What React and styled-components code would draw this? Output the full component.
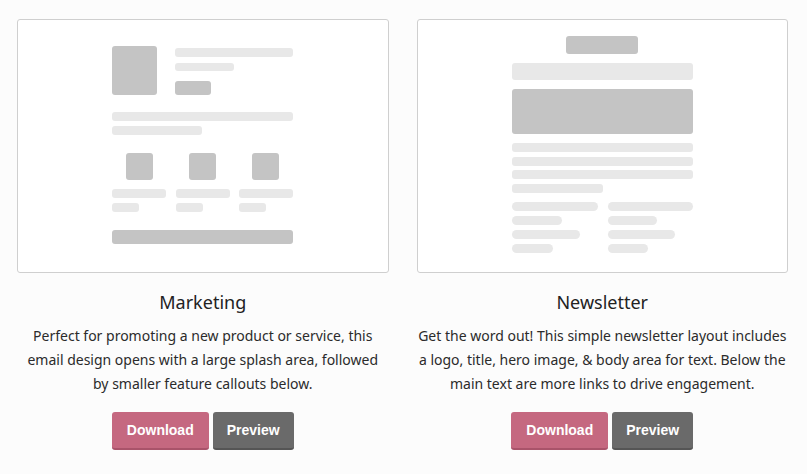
import React from 'react';
import styled, { createGlobalStyle } from 'styled-components';

const GlobalStyle = createGlobalStyle`
  html, body {
    margin: 0;
    background: #fcfcfc;
  }
  body {
    font-family: "Noto Sans", "Open Sans", sans-serif;
    color: #2b2b2b;
  }
`;

const Page = styled.div`
  display: grid;
  grid-template-columns: 1fr 1fr;
  column-gap: 28px;
  padding: 19px 19px 0 17px;
`;

const Column = styled.div`
  display: flex;
  flex-direction: column;
  align-items: center;
`;

const Thumb = styled.div`
  box-sizing: border-box;
  width: 100%;
  height: 254px;
  background: #fff;
  border: 1px solid #cfcfcf;
  border-radius: 3px;
  display: flex;
  justify-content: center;
`;

const Mock = styled.div`
  width: 181px;
  display: flex;
  flex-direction: column;
  padding-top: ${p => p.top}px;
`;

const Bar = styled.div`
  width: ${p => p.w || 181}px;
  height: ${p => p.h || 9}px;
  margin-top: ${p => p.mt || 0}px;
  background: ${p => (p.dark ? '#c4c4c4' : '#e8e8e8')};
  border-radius: ${p => (p.pill ? '5px' : '3px')};
  flex-shrink: 0;
  align-self: ${p => (p.center ? 'center' : 'flex-start')};
`;

const Row = styled.div`
  display: flex;
  gap: ${p => p.gap || 18}px;
  margin-top: ${p => p.mt || 0}px;
`;

const Stack = styled.div`
  display: flex;
  flex-direction: column;
  align-items: ${p => (p.center ? 'center' : 'flex-start')};
  width: ${p => p.w || 'auto'};
`;

const Title = styled.h2`
  margin: 17px 0 0;
  font-size: 18px;
  font-weight: 400;
  line-height: 24px;
  color: #222;
`;

const Description = styled.p`
  width: 369px;
  margin: 10px 0 0;
  font-size: 14px;
  line-height: 24px;
  text-align: center;
  color: #2b2b2b;
`;

const Actions = styled.div`
  display: flex;
  gap: 4px;
  margin-top: 16px;
`;

const Button = styled.button`
  box-sizing: border-box;
  height: 38px;
  padding: 0 ${p => (p.primary ? 15 : 14)}px;
  border: 0;
  border-bottom: 2px solid ${p => (p.primary ? '#a9536a' : '#555')};
  border-radius: 3px;
  background: ${p => (p.primary ? '#c56880' : '#6a6a6a')};
  color: #fff;
  font-family: "Liberation Sans", Arial, sans-serif;
  font-weight: 700;
  font-size: 14px;
  cursor: pointer;
`;

const MarketingMock = () => (
  <Mock top={26}>
    <Row gap={18}>
      <Bar dark w={45} h={49} />
      <Stack>
        <Bar w={118} h={9} mt={2} />
        <Bar w={59} h={8} mt={6} />
        <Bar dark w={36} h={14} mt={10} />
      </Stack>
    </Row>
    <Bar w={181} mt={17} />
    <Bar w={90} mt={5} />
    <Row gap={9} mt={18}>
      {[0, 1, 2].map(i => (
        <Stack key={i} center w="54.3px">
          <Bar dark w={27} h={27} center />
          <Bar w={54} h={9} mt={9} />
          <Bar w={27} h={9} mt={5} />
        </Stack>
      ))}
    </Row>
    <Bar dark w={181} h={14} mt={18} />
  </Mock>
);

const NewsletterMock = () => (
  <Mock top={16}>
    <Bar dark w={72} h={18} center />
    <Bar w={181} h={17} mt={9} />
    <Bar dark w={181} h={45} mt={9} />
    <Bar w={181} mt={9} />
    <Bar w={181} mt={5} />
    <Bar w={181} mt={4} />
    <Bar w={91} mt={5} />
    <Row gap={10} mt={9}>
      <Stack w="86px">
        <Bar pill w={86} />
        <Bar pill w={50} mt={5} />
        <Bar pill w={68} mt={5} />
        <Bar pill w={41} mt={5} />
      </Stack>
      <Stack w="85px">
        <Bar pill w={85} />
        <Bar pill w={49} mt={5} />
        <Bar pill w={67} mt={5} />
        <Bar pill w={40} mt={5} />
      </Stack>
    </Row>
  </Mock>
);

const templates = [
  {
    name: 'Marketing',
    text: 'Perfect for promoting a new product or service, this email design opens with a large splash area, followed by smaller feature callouts below.',
    Preview: MarketingMock
  },
  {
    name: 'Newsletter',
    text: 'Get the word out! This simple newsletter layout includes a logo, title, hero image, & body area for text. Below the main text are more links to drive engagement.',
    Preview: NewsletterMock
  }
];

const App = () => (
  <>
    <GlobalStyle />
    <Page>
      {templates.map(({ name, text, Preview }) => (
        <Column key={name}>
          <Thumb>
            <Preview />
          </Thumb>
          <Title>{name}</Title>
          <Description>{text}</Description>
          <Actions>
            <Button primary>Download</Button>
            <Button>Preview</Button>
          </Actions>
        </Column>
      ))}
    </Page>
  </>
);

export default App;
